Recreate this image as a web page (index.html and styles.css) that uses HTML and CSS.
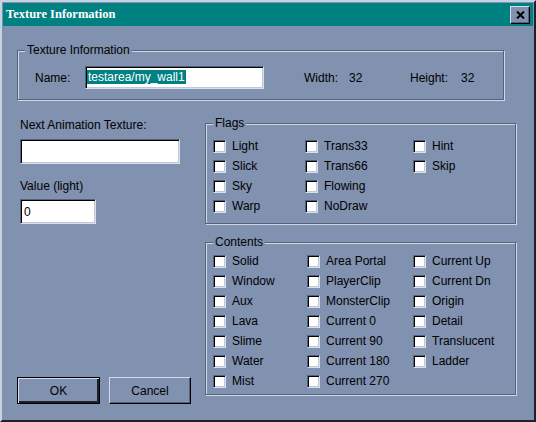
FILE: index.html
```html
<!DOCTYPE html>
<html lang="en">

<head>
    <meta charset="UTF-8">
    <title>Texture Information</title>
    <link rel="stylesheet" href="styles.css">
</head>

<body>
    <div class="window">
        <div class="titlebar">
            <span class="title">Texture Information</span>
            <button class="close-btn">
                <svg width="9" height="8" viewBox="0 0 9 8">
                    <path d="M1 0.5 L8 7.5 M8 0.5 L1 7.5" stroke="#000" stroke-width="2" fill="none"/>
                </svg>
            </button>
        </div>

        <div class="dialog">
            <fieldset class="group info-group">
                <legend>Texture Information</legend>
                <div class="info-row">
                    <span class="name-label">Name:</span>
                    <div class="field name-field"><span class="selected">testarea/my_wall1</span></div>
                    <span class="width-label">Width:</span>
                    <span class="dim-value">32</span>
                    <span class="height-label">Height:</span>
                    <span>32</span>
                </div>
            </fieldset>

            <div class="lower">
                <div class="left-col">
                    <div class="field-label">Next Animation Texture:</div>
                    <div class="field anim-field"></div>
                    <div class="field-label value-label">Value (light)</div>
                    <div class="field value-field">0</div>
                    <div class="buttons">
                        <button class="btn btn-default">OK</button>
                        <button class="btn">Cancel</button>
                    </div>
                </div>

                <div class="right-col">
                    <fieldset class="group flags-group">
                        <legend>Flags</legend>
                        <div class="check-grid flags-grid">
                            <label class="check"><span class="box"></span>Light</label>
                            <label class="check"><span class="box"></span>Slick</label>
                            <label class="check"><span class="box"></span>Sky</label>
                            <label class="check"><span class="box"></span>Warp</label>
                            <label class="check"><span class="box"></span>Trans33</label>
                            <label class="check"><span class="box"></span>Trans66</label>
                            <label class="check"><span class="box"></span>Flowing</label>
                            <label class="check"><span class="box"></span>NoDraw</label>
                            <label class="check"><span class="box"></span>Hint</label>
                            <label class="check"><span class="box"></span>Skip</label>
                        </div>
                    </fieldset>

                    <fieldset class="group contents-group">
                        <legend>Contents</legend>
                        <div class="check-grid contents-grid">
                            <label class="check"><span class="box"></span>Solid</label>
                            <label class="check"><span class="box"></span>Window</label>
                            <label class="check"><span class="box"></span>Aux</label>
                            <label class="check"><span class="box"></span>Lava</label>
                            <label class="check"><span class="box"></span>Slime</label>
                            <label class="check"><span class="box"></span>Water</label>
                            <label class="check"><span class="box"></span>Mist</label>
                            <label class="check"><span class="box"></span>Area Portal</label>
                            <label class="check"><span class="box"></span>PlayerClip</label>
                            <label class="check"><span class="box"></span>MonsterClip</label>
                            <label class="check"><span class="box"></span>Current 0</label>
                            <label class="check"><span class="box"></span>Current 90</label>
                            <label class="check"><span class="box"></span>Current 180</label>
                            <label class="check"><span class="box"></span>Current 270</label>
                            <label class="check"><span class="box"></span>Current Up</label>
                            <label class="check"><span class="box"></span>Current Dn</label>
                            <label class="check"><span class="box"></span>Origin</label>
                            <label class="check"><span class="box"></span>Detail</label>
                            <label class="check"><span class="box"></span>Translucent</label>
                            <label class="check"><span class="box"></span>Ladder</label>
                        </div>
                    </fieldset>
                </div>
            </div>
        </div>
    </div>
</body>

</html>
```

FILE: styles.css
```css
* {
    margin: 0;
    padding: 0;
    box-sizing: border-box;
}

body {
    background: #8191b0;
    font-family: "Liberation Sans", Arial, sans-serif;
    font-size: 12px;
    color: #000;
}

.window {
    width: 536px;
    height: 422px;
    padding: 1px;
    background: #8191b0;
    border-top: 2px solid #c8d2e2;
    border-left: 2px solid #c8d2e2;
    border-right: 2px solid #1c222c;
    border-bottom: 2px solid #1c222c;
}

.titlebar {
    height: 23px;
    background: #008080;
    display: flex;
    align-items: center;
    justify-content: space-between;
    padding: 0 3px;
}

.title {
    color: #fff;
    font-family: "Liberation Serif", "Times New Roman", serif;
    font-weight: bold;
    font-size: 12.5px;
}

.close-btn {
    width: 20px;
    height: 18px;
    background: #8191b0;
    border-top: 1px solid #d4dcea;
    border-left: 1px solid #d4dcea;
    border-right: 1px solid #000;
    border-bottom: 1px solid #000;
    box-shadow: inset -1px -1px 0 #56627c;
    display: flex;
    align-items: center;
    justify-content: center;
}

.dialog {
    padding-left: 14px;
}

/* group boxes */
.group {
    border: 1px solid #56627c;
    box-shadow: 1px 1px 0 #d0d8e6, inset 1px 1px 0 #d0d8e6;
    padding: 0 7px;
}

.group legend {
    padding: 0 2px;
    line-height: 14px;
    background: #8191b0;
}

.info-group {
    width: 487px;
    margin-top: 17px;
    padding-top: 9px;
    padding-bottom: 10px;
}

.info-row {
    display: flex;
    align-items: center;
    height: 23px;
}

.name-label {
    width: 50px;
    margin-left: 10px;
    flex-shrink: 0;
}

.field {
    background: #fff;
    border-top: 1px solid #56627c;
    border-left: 1px solid #56627c;
    border-right: 1px solid #d8e0ec;
    border-bottom: 1px solid #d8e0ec;
    box-shadow: inset 1px 1px 0 #000, inset -1px -1px 0 #c0c8d8;
    line-height: 14px;
    padding: 3px 2px;
}

.name-field {
    width: 179px;
    height: 23px;
    padding: 3px 1px;
    flex-shrink: 0;
}

.selected {
    background: #008080;
    color: #fff;
    display: inline-block;
    padding: 0 1px 0 1px;
}

.width-label {
    margin-left: 40px;
    width: 45px;
    flex-shrink: 0;
}

.dim-value {
    width: 61px;
    flex-shrink: 0;
}

.height-label {
    width: 51px;
    flex-shrink: 0;
}

/* lower half */
.lower {
    display: flex;
}

.left-col {
    width: 188px;
    display: flex;
    flex-direction: column;
}

.field-label {
    margin: 18px 0 0 3px;
    line-height: 14px;
}

.value-label {
    margin-top: 15px;
}

.anim-field {
    width: 160px;
    height: 25px;
    margin: 7px 0 0 3px;
}

.value-field {
    width: 76px;
    height: 25px;
    margin: 6px 0 0 3px;
    padding: 5px 3px;
}

.buttons {
    display: flex;
    gap: 9px;
    margin-top: 153px;
}

.btn {
    width: 82px;
    height: 27px;
    background: #8191b0;
    font-family: "Liberation Sans", Arial, sans-serif;
    font-size: 12px;
    color: #000;
    border-top: 1px solid #d4dcea;
    border-left: 1px solid #d4dcea;
    border-right: 1px solid #000;
    border-bottom: 1px solid #000;
    box-shadow: inset -1px -1px 0 #56627c;
}

.btn-default {
    width: 83px;
    border: 1px solid #000;
    box-shadow: inset 1px 1px 0 #d4dcea, inset -2px -2px 0 #1c222c;
}

.right-col {
    width: 311px;
}

.flags-group {
    margin-top: 16px;
    padding-top: 6px;
    padding-bottom: 7px;
}

.contents-group {
    margin-top: 11px;
    padding-top: 2px;
    padding-bottom: 3px;
}

.check-grid {
    display: grid;
    grid-auto-flow: column;
    grid-auto-rows: 20px;
}

.flags-grid {
    grid-template-rows: repeat(4, 20px);
    grid-template-columns: 92px 108px 1fr;
}

.contents-grid {
    grid-template-rows: repeat(7, 20px);
    grid-template-columns: 94px 106px 1fr;
}

.check {
    display: flex;
    align-items: center;
    gap: 6px;
}

.box {
    width: 13px;
    height: 13px;
    background: #fff;
    border-top: 1px solid #56627c;
    border-left: 1px solid #56627c;
    border-right: 1px solid #d8e0ec;
    border-bottom: 1px solid #d8e0ec;
    box-shadow: inset 1px 1px 0 #000, inset -1px -1px 0 #c0c8d8;
}
```
